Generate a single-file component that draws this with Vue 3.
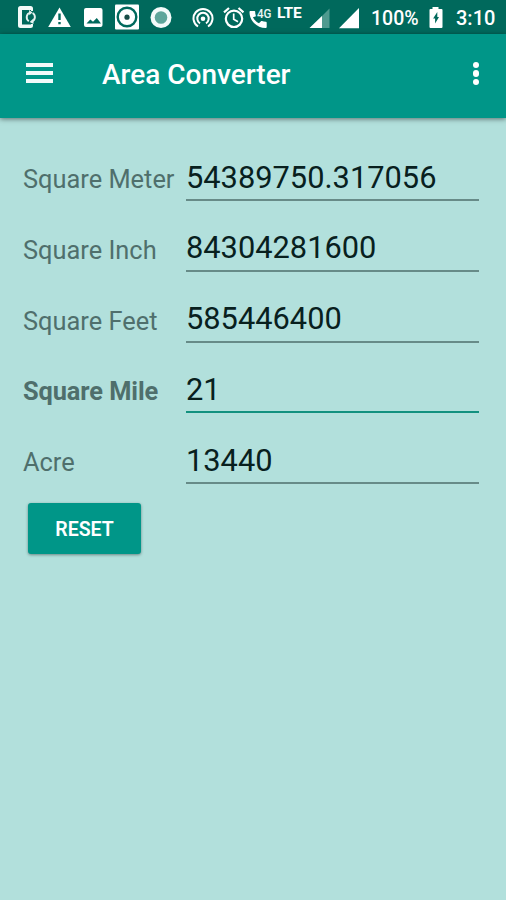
<template>
  <div class="screen">
    <div class="status">
      <svg class="icon" width="19" height="34" viewBox="18 0 19 34">
        <path d="M20.500 6h10a2.500 2.500 0 0 1 2.500 2.500V11h-2v-1H22v14.500h9V24h2v1.500a2.500 2.500 0 0 1-2.500 2.500h-10a2.500 2.500 0 0 1-2.500-2.500v-17A2.500 2.500 0 0 1 20.500 6z" fill="#f2faf8" />
        <path d="M28.800 21.200a4.800 4.800 0 0 1 1.500-8.600M32.600 13a4.800 4.800 0 0 1-.6 8.500" fill="none" stroke="#e4f2f0" stroke-width="1.900" />
        <path d="M29 10l3.500 2.500-3.200 2.700zM33.500 18.500V24l-3.800-2z" fill="#e4f2f0" />
      </svg>
      <svg class="icon warn" width="23" height="34" viewBox="48 0 23 34">
        <path d="M59.500 7.500L70.800 27H48.200z" fill="#fff" />
        <path d="M58.300 13.500h2.400v6.500h-2.400zM58.300 22h2.400v2.300h-2.400z" fill="#00695c" />
      </svg>
      <svg class="icon photo" width="20" height="34" viewBox="83 0 20 34">
        <rect x="84" y="8" width="18.500" height="19" rx="2" fill="#fff" />
        <path d="M86.500 23.500l3.800-4 2.700 2.200 3.800-3.700 4.200 5.500z" fill="#00695c" />
      </svg>
      <svg class="icon disc" width="24" height="34" viewBox="115 0 24 34">
        <rect x="115" y="4.500" width="24" height="25" rx="1" fill="#fff" />
        <circle cx="127" cy="17" r="9.300" fill="none" stroke="#00695c" stroke-width="2.400" />
        <circle cx="127" cy="17.200" r="2.600" fill="#174c46" />
      </svg>
      <svg class="icon dot" width="22" height="34" viewBox="150 0 22 34">
        <circle cx="161" cy="17.500" r="10.500" fill="#f4fbfa" />
        <circle cx="161" cy="17.500" r="6.300" fill="#5fa69b" />
      </svg>
      <svg class="icon hotspot" width="22" height="34" viewBox="192 0 22 34">
        <g fill="none" stroke="#fff" stroke-width="2">
          <path d="M198 26.500a9.500 9.500 0 1 1 10 0" />
          <path d="M200 23.300a5.700 5.700 0 1 1 6 0" />
        </g>
        <circle cx="203" cy="18.700" r="2.300" fill="#fff" />
      </svg>
      <svg class="icon alarm" width="22" height="34" viewBox="223 0 22 34">
        <g fill="none" stroke="#fff" stroke-width="2.200">
          <circle cx="234" cy="18.800" r="8.200" />
          <path d="M224 12.300l5-4.300M243.500 12.300l-5-4.300" />
          <path d="M233.700 13.500v5.700l4.300 2.600" stroke-width="1.700" />
        </g>
      </svg>
      <svg class="icon call" width="23" height="34" viewBox="249 0 23 34">
        <path d="M252.900 17.200c1.400 2.700 3.400 4.800 6.100 6.100l2-2c.3-.3.700-.4 1-.2 1.200.4 2.400.6 3.700.6.500 0 1 .4 1 1v4.300c0 .5-.5 1-1 1C256.800 28 249.500 20.700 249.500 12c0-.6.400-1 1-1h3.700c.6 0 1 .4 1 1 0 1.200.2 2.400.6 3.500.1.400 0 .8-.3 1z" fill="#fff" />
        <text x="257" y="17.500" font-size="13" textLength="14.500" lengthAdjust="spacingAndGlyphs" fill="#e8f5f3">4G</text>
      </svg>
      <span class="lte">LTE</span>
      <svg class="icon sim" width="21" height="34" viewBox="309 0 21 34">
        <path d="M329.500 8.500V28H310z" fill="#4f9a8f" />
        <path d="M322 16v12h-12.500z" fill="#fff" />
      </svg>
      <svg class="icon sim2" width="21" height="34" viewBox="339 0 21 34">
        <path d="M359 8v20.200H339z" fill="#fff" />
      </svg>
      <span class="percent">100%</span>
      <svg class="icon battery" width="14" height="34" viewBox="429 0 14 34">
        <path d="M432.500 7h6v2h3a1 1 0 0 1 1 1v17a1 1 0 0 1-1 1h-11a1 1 0 0 1-1-1V10a1 1 0 0 1 1-1h2z" fill="#fff" />
        <path d="M437.300 12v5h1.700l-3.900 6.500v-5h-2z" fill="#00695c" />
      </svg>
      <span class="clock">3:10</span>
    </div>

    <header class="toolbar">
      <button class="menu" aria-label="Menu">
        <i></i><i></i><i></i>
      </button>
      <h1>Area Converter</h1>
      <button class="more" aria-label="More">
        <i></i><i></i><i></i>
      </button>
    </header>

    <form @submit.prevent="reset">
      <div v-for="unit in units" :key="unit.id" class="row" :class="{ active: unit.id === active }">
        <label :for="unit.id">{{ unit.label }}</label>
        <div class="field">
          <input
            type="text"
            :id="unit.id"
            v-model="unit.value"
            autocomplete="off"
            @focus="active = unit.id"
            @input="convert(unit)"
          >
        </div>
      </div>
      <button type="submit" class="reset">RESET</button>
    </form>
  </div>
</template>

<script setup>
import { ref, reactive } from 'vue';

const active = ref('mile');

// size = square meters in one unit
const units = reactive([
  { id: 'meter', label: 'Square Meter', size: 1, value: '54389750.317056' },
  { id: 'inch', label: 'Square Inch', size: 0.00064516, value: '84304281600' },
  { id: 'feet', label: 'Square Feet', size: 0.09290304, value: '585446400' },
  { id: 'mile', label: 'Square Mile', size: 2589988.110336, value: '21' },
  { id: 'acre', label: 'Acre', size: 4046.8564224, value: '13440' }
]);

function convert(source) {
  const meters = parseFloat(source.value) * source.size;

  units.forEach((unit) => {
    if (unit.id !== source.id) {
      unit.value = isNaN(meters) ? '' : String(Number((meters / unit.size).toPrecision(14)));
    }
  });
}

function reset() {
  units.forEach((unit) => {
    unit.value = '';
  });
}
</script>

<style>
body {
  margin: 0;
  background: #b2e0dc;
}
</style>

<style scoped>
.screen {
  min-height: 900px;
  background: #b2e0dc;
  font-family: Roboto, "Liberation Sans", sans-serif;
}

.status {
  display: flex;
  height: 34px;
  padding-left: 18px;
  background: #00695c;
  color: #fff;
  font-weight: 500;
  white-space: nowrap;
}

.icon {
  flex: none;
  display: block;
}

.warn {
  margin-left: 11px;
}

.photo {
  margin-left: 12px;
}

.disc {
  margin-left: 12px;
}

.dot {
  margin-left: 11px;
}

.hotspot {
  margin-left: 20px;
}

.alarm {
  margin-left: 9px;
}

.call {
  margin-left: 4px;
}

.lte {
  width: 26px;
  margin-left: 5px;
  font-size: 15.500px;
  font-weight: 700;
  line-height: 26px;
  letter-spacing: -0.1px;
}

.sim {
  margin-left: 6px;
}

.sim2 {
  margin-left: 9px;
}

.percent {
  width: 48px;
  margin-left: 11px;
  font-size: 19.500px;
  line-height: 37px;
}

.battery {
  margin-left: 10px;
}

.clock {
  margin-left: 13px;
  font-size: 20px;
  line-height: 37px;
}

.toolbar {
  display: flex;
  align-items: center;
  box-sizing: border-box;
  height: 84px;
  padding: 0 26px;
  background: #009688;
  box-shadow: 0 1px 5px rgba(0, 0, 0, 0.5);
}

.toolbar button {
  display: flex;
  flex-direction: column;
  padding: 0;
  border: none;
  background: none;
  cursor: pointer;
}

.toolbar .menu {
  gap: 4px;
  width: 27px;
  margin-top: -6px;
}

.menu i {
  width: 27px;
  height: 4px;
  background: #f2fafa;
}

.toolbar h1 {
  flex: 1;
  margin: -2px 0 0 49px;
  color: #fff;
  font-size: 28px;
  font-weight: 500;
  line-height: 34px;
}

.toolbar .more {
  align-items: center;
  gap: 2px;
  width: 8px;
  margin-top: -5px;
}

.more i {
  width: 6.500px;
  height: 6.500px;
  border-radius: 50%;
  background: #fff;
}

form {
  padding: 24px 27px 0 23px;
}

.row {
  display: flex;
  height: 70.800px;
}

.row label {
  flex: none;
  width: 163px;
  padding-top: 21px;
  color: #4f6f6c;
  font-size: 25.400px;
  line-height: 32px;
  white-space: nowrap;
}

.row.active label {
  font-weight: 700;
  letter-spacing: -0.1px;
}

.field {
  flex: 1;
  box-sizing: border-box;
  height: 59px;
  border-bottom: 2px solid #678b88;
}

.field input {
  display: block;
  box-sizing: border-box;
  width: 100%;
  height: 56px;
  padding: 14px 0 0;
  border: none;
  outline: none;
  background: none;
  color: #08201e;
  font-family: inherit;
  font-size: 30.800px;
}

.row.active .field {
  border-bottom-color: #12917f;
}

.reset {
  display: block;
  width: 113px;
  height: 51px;
  margin: 7px 0 0 5px;
  padding: 3px 0 0;
  border: none;
  border-radius: 3px;
  background: #009688;
  box-shadow: 0 1px 3px rgba(0, 0, 0, 0.4);
  color: #fff;
  font-family: inherit;
  font-size: 19.500px;
  font-weight: 600;
  cursor: pointer;
}
</style>
